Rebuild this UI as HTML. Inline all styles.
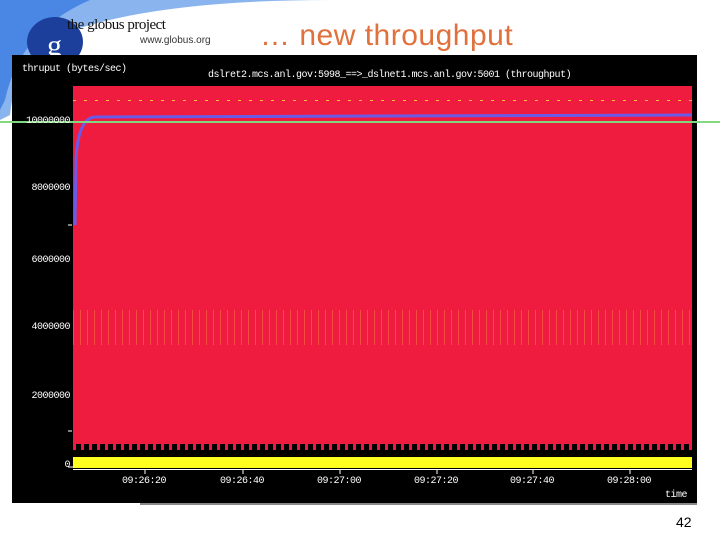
<!DOCTYPE html>
<html><head><style>
body{margin:0;width:720px;height:540px;background:#fff;position:relative;overflow:hidden;font-family:"Liberation Sans",sans-serif}
.abs{position:absolute}
.lbl{position:absolute;color:#fff;font-family:"Liberation Mono",monospace;font-size:10px;letter-spacing:-0.5px}
.yl{position:absolute;color:#fff;font-family:"Liberation Mono",monospace;font-size:10px;letter-spacing:-0.5px;right:650px;text-align:right}
</style></head><body>
<svg class="abs" style="left:0;top:0" width="720" height="540">
<path d="M0,0 L330,0 Q150,0 60,35 Q15,60 10,115 L0,120 Z" fill="#8ab4ee"/>
<path d="M0,0 L90,0 Q20,30 5,100 L0,110 Z" fill="#4a86e4"/>
<ellipse cx="55" cy="42" rx="28" ry="25" fill="#1c3f9c"/>
<path d="M35,55 Q60,80 60,62" stroke="#1c3f9c" stroke-width="4" fill="none"/>
<text x="47" y="55" fill="#fff" font-family="Liberation Serif" font-size="30">g</text>
</svg>
<div class="abs" style="left:67px;top:17px;font-family:'Liberation Serif',serif;font-size:15px;color:#111;letter-spacing:-0.5px">the globus project</div>
<div class="abs" style="left:140px;top:35px;font-size:10px;color:#333">www.globus.org</div>
<div class="abs" style="left:260px;top:19px;font-size:30px;color:#e0703c;letter-spacing:0.5px">… new throughput</div>
<div class="abs" style="left:12px;top:55px;width:685px;height:448px;background:#000"></div>
<div class="abs" style="left:140px;top:503px;width:557px;height:2px;background:#888"></div>
<div class="lbl" style="left:22px;top:64px">thruput (bytes/sec)</div>
<div class="lbl" style="left:208px;top:70px">dslret2.mcs.anl.gov:5998_==>_dslnet1.mcs.anl.gov:5001 (throughput)</div>
<div class="abs" style="left:73px;top:86px;width:619px;height:362px;background:#f01c40"></div>
<div class="abs" style="left:73px;top:310px;width:619px;height:35px;background:repeating-linear-gradient(90deg,rgba(255,220,60,.25) 0 1px,transparent 1px 7px)"></div>
<div class="abs" style="left:73px;top:100px;width:619px;height:1px;background:repeating-linear-gradient(90deg,#f8c040 0 3px,transparent 3px 11px)"></div>
<div class="abs" style="left:73px;top:444px;width:619px;height:6px;background:repeating-linear-gradient(90deg,#f01c40 0 3px,#000 3px 8px)"></div>
<div class="abs" style="left:73px;top:457px;width:619px;height:11px;background:#ffff20"></div>
<div class="abs" style="left:73px;top:469px;width:619px;height:1px;background:#fff"></div>
<svg class="abs" style="left:0;top:0" width="720" height="540">
<path d="M75,225 L76,160 Q78,118 95,117 L692,115" stroke="#6a5ae8" stroke-width="3" fill="none"/>
<line x1="0" y1="122" x2="720" y2="122" stroke="#80d880" stroke-width="2"/>
<g stroke="#fff"><line x1="145" y1="469" x2="145" y2="474"/><line x1="243" y1="469" x2="243" y2="474"/><line x1="340" y1="469" x2="340" y2="474"/><line x1="437" y1="469" x2="437" y2="474"/><line x1="533" y1="469" x2="533" y2="474"/><line x1="630" y1="469" x2="630" y2="474"/>
<line x1="68" y1="467" x2="73" y2="467"/><line x1="68" y1="225" x2="72" y2="225"/><line x1="68" y1="431" x2="72" y2="431"/></g>
</svg>
<div class="yl" style="top:116px">10000000</div>
<div class="yl" style="top:183px">8000000</div>
<div class="yl" style="top:255px">6000000</div>
<div class="yl" style="top:322px">4000000</div>
<div class="yl" style="top:391px">2000000</div>
<div class="yl" style="top:460px">0</div>
<div class="lbl" style="left:122px;top:476px">09:26:20</div>
<div class="lbl" style="left:220px;top:476px">09:26:40</div>
<div class="lbl" style="left:317px;top:476px">09:27:00</div>
<div class="lbl" style="left:414px;top:476px">09:27:20</div>
<div class="lbl" style="left:510px;top:476px">09:27:40</div>
<div class="lbl" style="left:607px;top:476px">09:28:00</div>
<div class="lbl" style="left:665px;top:490px">time</div>
<div class="abs" style="left:676px;top:514px;font-size:14px;color:#000">42</div>
</body></html>
